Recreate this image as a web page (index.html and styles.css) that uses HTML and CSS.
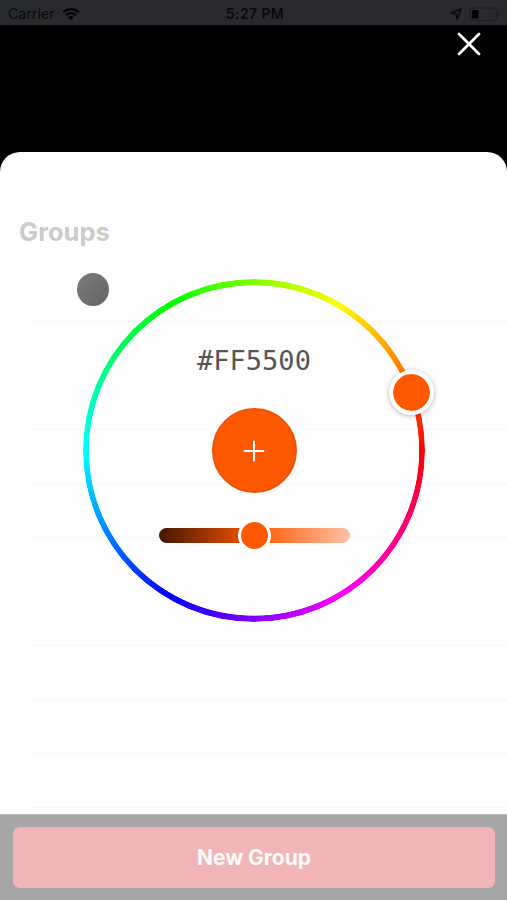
FILE: index.html
```
<!DOCTYPE html>
<html lang="en">

  <head>
    <meta charset="utf-8">
    <title>Groups</title>
    <link rel="stylesheet" href="styles.css">
  </head>

  <body>

    <div class="screen">

      <div class="status">
        <div class="status-left">
          <span class="carrier">Carrier</span>
          <svg width="18" height="14" viewBox="0 0 18 14" fill="none" stroke="#020304" stroke-width="2.3">
            <path d="M1.2 5.2a11.2 11.2 0 0 1 15.6 0M4.1 8.1a7 7 0 0 1 9.8 0"/>
            <path d="M9 13L6.2 10.3a4 4 0 0 1 5.6 0z" fill="#020304" stroke="none"/>
          </svg>
        </div>
        <span class="clock">5:27 PM</span>
        <div class="status-right">
          <svg width="12" height="12" viewBox="0 0 12 12" fill="none" stroke="#08090a" stroke-width="1.5" stroke-linejoin="round">
            <path d="M1 5.2L11 1L7.2 11L6.2 6z"/>
          </svg>
          <svg width="33" height="15" viewBox="0 0 33 15">
            <rect x="1" y="1" width="27" height="12.5" rx="4" fill="none" stroke="#1b1c1f" stroke-width="1.2"/>
            <rect x="3" y="3" width="6.5" height="8.5" rx="1" fill="#000"/>
            <path d="M29.5 5q3 2.2 0 4.6z" fill="#1b1c1f"/>
          </svg>
        </div>
      </div>

      <div class="header">
        <svg class="close" width="24" height="24" viewBox="0 0 24 24" stroke="#fff" stroke-width="2.8" stroke-linecap="round">
          <path d="M2 2L22 22M22 2L2 22"/>
        </svg>
      </div>

      <div class="sheet">
        <h1 class="title">Groups</h1>
        <div class="list">
          <div class="row"></div>
          <div class="row faint"></div>
          <div class="row"></div>
          <div class="row"></div>
          <div class="row"></div>
          <div class="row faint"></div>
          <div class="row"></div>
          <div class="row"></div>
          <div class="row"></div>
          <div class="row"></div>
        </div>
      </div>

      <div class="footer">
        <div class="button">New Group</div>
      </div>

      <!-- colour picker floating over the list -->
      <div class="picker">
        <div class="ring"></div>
        <div class="swatch"></div>
        <div class="hue-handle"></div>
        <div class="controls">
          <div class="hex">#FF5500</div>
          <div class="add">
            <svg width="22" height="22" viewBox="0 0 22 22" stroke="#fff" stroke-width="2">
              <path d="M11 .8V21.2M.8 11H21.2"/>
            </svg>
          </div>
          <div class="slider">
            <div class="knob"></div>
          </div>
        </div>
      </div>

    </div>

  </body>

</html>
```

FILE: styles.css
```
*
{
  box-sizing: border-box;
}

body
{
  margin: 0;
  background: #000;
  font-family: Inter, "Liberation Sans", sans-serif;
}

svg
{
  display: block;
}

.screen
{
  position: relative;
  display: flex;
  flex-direction: column;
  width: 507px;
  height: 900px;
  overflow: hidden;
}

.status
{
  display: grid;
  grid-template-columns: 1fr auto 1fr;
  align-items: center;
  height: 25px;
  padding: 3px 5px 0 8px;
  background: #292a2e;
  color: #08090a;
  font-size: 14px;
  line-height: 20px;
}

.status-left, .status-right
{
  display: flex;
  align-items: center;
  gap: 7px;
}

.status-right
{
  justify-content: flex-end;
}

.carrier
{
  letter-spacing: 0.1px;
}

.clock
{
  font-weight: 600;
  letter-spacing: 0.4px;
}

.header
{
  display: flex;
  justify-content: flex-end;
  height: 127px;
  padding: 7px 26px 0 0;
}

.sheet
{
  flex: 1;
  overflow: hidden;
  padding-top: 62px;
  border-radius: 20px 20px 0 0;
  background: #fefefe;
}

.title
{
  height: 54px;
  margin: 0 0 0 19px;
  color: #cbcbcb;
  font-size: 25.5px;
  font-weight: 700;
  line-height: 36px;
}

.list
{
  padding-left: 29px;
}

.row
{
  height: 54px;
  border-bottom: 1px solid #f8f8f8;
}

.faint
{
  border-color: #fdfdfd;
}

.footer
{
  height: 86px;
  padding: 12px 12px 12px 13px;
  border-top: 1px solid #bdbdbd;
  background: #a6a6a6;
}

.button
{
  height: 61px;
  border-radius: 7px;
  background: #f1b5b8;
  color: #fffdf9;
  font-size: 21px;
  font-weight: 700;
  line-height: 61px;
  text-align: center;
}

.picker
{
  position: absolute;
  top: 279px;
  left: 83px;
  width: 342px;
  height: 343px;
}

.ring
{
  position: absolute;
  inset: 0;
  border-radius: 50%;
  background: conic-gradient(from 90deg, #f00, #f0f, #00f, #0ff, #0f0, #ff0, #f00);
  -webkit-mask: radial-gradient(circle closest-side, transparent 164.8px, #000 165.5px);
  mask: radial-gradient(circle closest-side, transparent 164.8px, #000 165.5px);
}

.swatch
{
  position: absolute;
  top: -6px;
  left: -6px;
  width: 32px;
  height: 33px;
  border-radius: 50%;
  background: linear-gradient(135deg, #7c7c7c, #636363);
}

.hue-handle
{
  position: absolute;
  top: 91px;
  left: 306px;
  width: 45px;
  height: 45px;
  border: 4.5px solid #fff;
  border-radius: 50%;
  background: #ff5900 content-box;
  box-shadow: 0 1px 5px rgba(0, 0, 0, 0.3);
}

.controls
{
  display: flex;
  flex-direction: column;
  align-items: center;
  padding-top: 62px;
}

.hex
{
  height: 67px;
  color: #555;
  font-family: "DejaVu Sans Mono", monospace;
  font-size: 27px;
  line-height: 40px;
}

.add
{
  display: grid;
  place-items: center;
  width: 85px;
  height: 85px;
  border: 2px solid #ed5208;
  border-radius: 50%;
  background: #ff5900;
}

.slider
{
  display: flex;
  align-items: center;
  justify-content: center;
  width: 191px;
  height: 15px;
  margin-top: 35px;
  border-radius: 8px;
  background: linear-gradient(90deg, #4d1a00 3%, #ff5500 50%, #ffbc9c 97%);
}

.knob
{
  flex: none;
  width: 33px;
  height: 33px;
  border: 3px solid #fff;
  border-radius: 50%;
  background: #ff5900;
}
```
